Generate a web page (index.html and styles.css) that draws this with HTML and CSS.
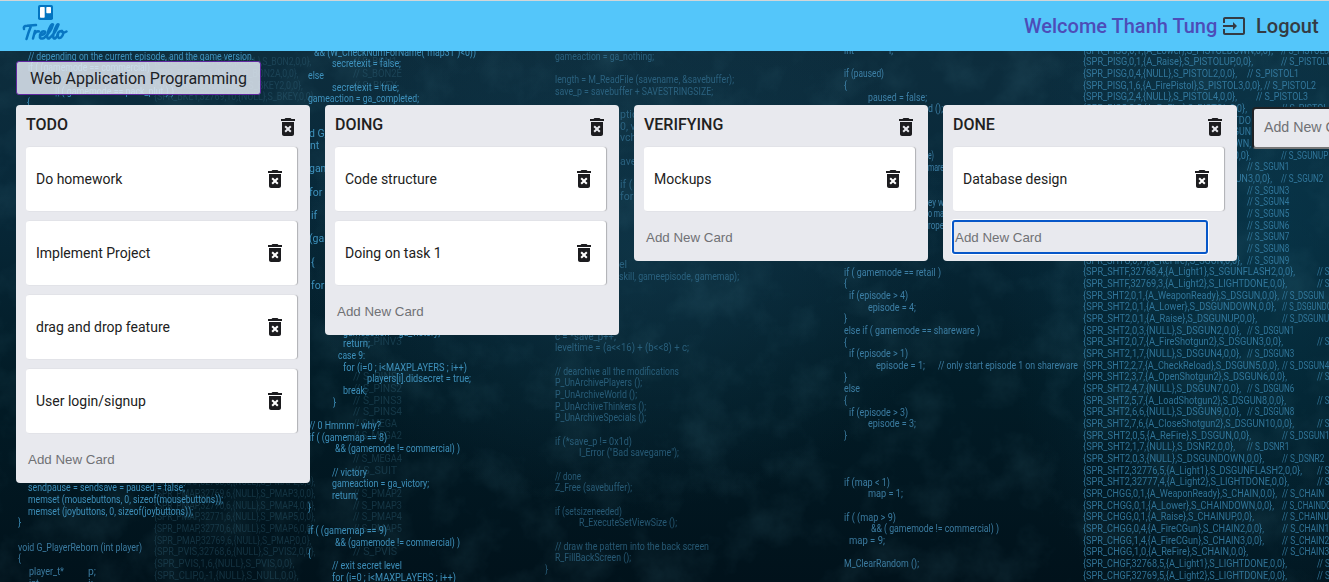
FILE: index.html
```html
<!DOCTYPE html>
<html lang="en">
<head>
<meta charset="utf-8">
<title>Trello</title>
<link rel="stylesheet" href="styles.css">
</head>
<body>
<svg class="wallpaper" viewBox="0 0 1329 582" aria-hidden="true">
  <defs>
    <filter id="clouds" x="0" y="0" width="100%" height="100%">
      <feTurbulence type="fractalNoise" baseFrequency="0.022" numOctaves="5" seed="8"/>
      <feColorMatrix values="0 0 0 0 0.08  0 0 0 0 0.26  0 0 0 0 0.34  2.2 0 0 0 -0.95"/>
    </filter>
  </defs>
  <rect width="1329" height="582" filter="url(#clouds)" opacity="0.13"/>
  <g id="code"></g>
</svg>
<svg class="sprite" aria-hidden="true">
  <symbol id="trash" viewBox="0 0 24 24"><path d="M6 19c0 1.1.9 2 2 2h8c1.1 0 2-.9 2-2V7H6v12zm2.46-7.12 1.41-1.41L12 12.59l2.12-2.12 1.41 1.41L13.41 14l2.12 2.12-1.41 1.41L12 15.41l-2.12 2.12-1.41-1.41L10.59 14l-2.13-2.12zM15.5 4l-1-1h-5l-1 1H5v2h14V4z"/></symbol>
</svg>
<header class="appbar">
  <div class="logo">
    <svg class="logo-mark" viewBox="0 0 15 15"><rect width="15" height="15" rx="1.8" fill="#0274c0"/><rect x="2" y="2" width="4.7" height="10.7" rx=".7" fill="#fff"/><rect x="8.3" y="2" width="4.7" height="6.2" rx=".7" fill="#fff"/></svg>
    <svg class="logo-word" viewBox="0 0 46 20" role="img" aria-label="Trello"><g fill="none" stroke="#0876c2" stroke-width="2.5" stroke-linecap="round" stroke-linejoin="round"><path d="M2 7Q1 3.8 5 3.8L14 3M9 4Q6.500 10 4.500 17"/><path d="M13 9L11 16.500M12 12.500Q14.500 8.500 17 9.500"/><path d="M18.500 13.500Q24 12 23 9.500Q20 8 18 13Q17 18 22 16Q29 10 31 2.500Q29 1 26 10Q24 17 27 16.500Q33 12 36.500 2.500Q35 1 32 10Q30 17 33 16.500Q35 15 36 12.500"/><path d="M40 9Q36 9 35.500 13Q36 17 39 15.500Q43 11 40 9Q40 12 44.500 9.500"/></g></svg>
  </div>
  <div class="account">
    <span class="welcome">Welcome Thanh Tung</span>
    <svg class="exit" viewBox="0 0 24 24"><path d="M21 3.010H3c-1.100 0-2 .9-2 2V9h2V4.990h18v14.030H3V15H1v4.010c0 1.100.9 1.980 2 1.980h18c1.100 0 2-.88 2-1.980v-14c0-1.110-.9-2-2-2zM11 16l4-4-4-4v3H1v2h10v3z"/></svg>
    <span class="logout">Logout</span>
  </div>
</header>
<main>
  <button class="board-name">Web Application Programming</button>
  <div class="lists">
    <section class="list">
      <h2><span>TODO</span><svg><use href="#trash"/></svg></h2>
      <div class="card"><span>Do homework</span><svg><use href="#trash"/></svg></div>
      <div class="card"><span>Implement Project</span><svg><use href="#trash"/></svg></div>
      <div class="card"><span>drag and drop feature</span><svg><use href="#trash"/></svg></div>
      <div class="card"><span>User login/signup</span><svg><use href="#trash"/></svg></div>
      <div class="new-card">Add New Card</div>
    </section>
    <section class="list">
      <h2><span>DOING</span><svg><use href="#trash"/></svg></h2>
      <div class="card"><span>Code structure</span><svg><use href="#trash"/></svg></div>
      <div class="card"><span>Doing on task 1</span><svg><use href="#trash"/></svg></div>
      <div class="new-card">Add New Card</div>
    </section>
    <section class="list">
      <h2><span>VERIFYING</span><svg><use href="#trash"/></svg></h2>
      <div class="card"><span>Mockups</span><svg><use href="#trash"/></svg></div>
      <div class="new-card">Add New Card</div>
    </section>
    <section class="list">
      <h2><span>DONE</span><svg><use href="#trash"/></svg></h2>
      <div class="card"><span>Database design</span><svg><use href="#trash"/></svg></div>
      <div class="new-card focused">Add New Card</div>
    </section>
    <div class="new-list">Add New Column</div>
  </div>
</main>
<script src="wallpaper.js"></script>
</body>
</html>
```
FILE: styles.css
```css
* { box-sizing: border-box; }
body {
  margin: 0;
  height: 582px;
  overflow: hidden;
  font-family: Roboto, "Liberation Sans", sans-serif;
  color: #212121;
  background:
    radial-gradient(ellipse 330px 260px at 630px 250px, rgba(20, 62, 82, .55), transparent),
    radial-gradient(ellipse 260px 420px at 1260px 260px, rgba(8, 62, 84, .55), transparent),
    linear-gradient(#0d2d3d 50px, #08293a 190px, #021c27 380px, #01121b 582px);
}
.wallpaper {
  position: absolute;
  inset: 0;
  z-index: -1;
  width: 1329px;
  height: 582px;
  font: 10.5px Roboto, sans-serif;
}
.sprite { display: none; }
.bright { fill: #459fce; opacity: .88; }
.mid { fill: #4d9bc9; opacity: .75; }
.dim { fill: #3b7ea3; opacity: .62; }
.right { fill: #3c8ab4; opacity: .78; }
.ghost { fill: #397089; opacity: .33; }

.appbar {
  display: flex;
  justify-content: space-between;
  height: 51px;
  padding: 4px 10px 0 22px;
  border-top: 1px solid #d2d6d8;
  background: #54c6fa;
}
.logo { display: flex; flex-direction: column; align-items: center; width: 46px; }
.logo-mark { width: 15px; height: 15px; }
.logo-word { width: 46px; height: 20px; margin-top: 2px; }
.account {
  display: flex;
  align-items: center;
  height: 42px;
  font-size: 20px;
  font-weight: 500;
  line-height: 24px;
}
.welcome { width: 194px; color: #4d4db8; white-space: nowrap; }
.exit { width: 24px; height: 24px; margin: 0 10px 0 4px; fill: #343b43; }
.logout { width: 63px; color: #343b43; }

main { padding: 10px 16px; }
.board-name {
  display: block;
  width: 245px;
  height: 34px;
  padding: 0;
  border: 1px solid #6128a0;
  border-radius: 3px;
  background: rgba(226, 233, 242, .85);
  color: #1c2226;
  font: 16px Roboto, sans-serif;
}
.lists { display: flex; align-items: flex-start; gap: 15px; margin-top: 10px; }
.list {
  flex: 0 0 294px;
  padding: 0 12px 8px 10px;
  border-radius: 4px;
  background: #e8e9ee;
}
.list h2 {
  display: flex;
  justify-content: space-between;
  height: 42px;
  margin: 0;
  padding: 9px 0 0;
  font-size: 16px;
  font-weight: 500;
  line-height: 22px;
}
svg { flex: none; }
.list svg { width: 24px; height: 24px; fill: #1c1c1f; }
.list h2 svg { margin: 1px -2px 0 0; }
.card {
  display: flex;
  align-items: center;
  justify-content: space-between;
  height: 64px;
  width: 271px;
  margin-bottom: 10px;
  padding: 0 10px;
  border-radius: 3px;
  background: #fff;
  box-shadow: 1px 0 1px rgba(0, 0, 0, .25);
  font-size: 14px;
}
.new-card {
  width: 254px;
  height: 32px;
  padding: 1px 0 0 2px;
  color: #707175;
  font: 13.333px/32px "Liberation Sans", sans-serif;
}
.focused {
  border-radius: 2px;
  outline: 2px solid #0757c8;
  outline-offset: -1px;
  box-shadow: 0 0 0 2px #fff;
}
.new-list {
  flex: 0 0 294px;
  height: 42px;
  margin: 2px 0 0 0;
  padding-left: 10px;
  border: 2px solid #202225;
  border-bottom-color: #777;
  border-radius: 4px;
  background: #e8e9ee;
  color: #707175;
  font: 14.2px/37px "Liberation Sans", sans-serif;
}
```
FILE: wallpaper.js
```javascript
// Each block: style, centre of row 0, then [row, x, width, text]; width 0 keeps the natural width.
const ROW = 11.667;
const blocks = [
  ["bright", 56, [
    [0, 28, 226, "// depending on the current episode, and the game version."],
    [1, 28, 122, "if ( (gamemode == commercial)"], [3, 55, 119, "|| ( gamemode == pack_plut ) )"], [4, 27, 3, "{"],
    [37, 28, 157, "sendpause = sendsave = paused = false;"],
    [38, 28, 195, "memset (mousebuttons, 0, sizeof(mousebuttons));"],
    [39, 28, 165, "memset (joybuttons, 0, sizeof(joybuttons));"], [40, 18, 3, "}"]
  ]],
  ["mid", 56, [
    [42.1, 18, 124, "void G_PlayerReborn (int player)"], [43.1, 18, 3, "{"],
    [44.2, 29, 35, "player_t*"], [44.2, 88, 8, "p;"], [45.2, 29, 10, "int"], [45.2, 88, 5, "i;"]
  ]],
  ["bright", 52.3, [
    [0, 314, 162, "&& (W_CheckNumForName(\"map31\")<0))"],
    [1, 332, 69, "secretexit = false;"], [2, 308, 16, "else"],
    [3, 332, 67, "secretexit = true;"], [4, 308, 111, "gameaction = ga_completed;"],
    [7, 309, 0, "d G_"], [8, 310, 0, "nt"], [10, 309, 0, "gam"], [12, 309, 0, "for ("],
    [14, 311, 0, "if"], [16, 309, 0, "(gam"], [18, 311, 0, "{"], [20, 311, 0, "for"],
    [24, 343, 97, "gameaction = ga_victory;"], [25, 343, 27, "return;"], [26, 338, 27, "case 9:"],
    [27, 343, 124, "for (i=0 ; i<MAXPLAYERS ; i++)"], [28, 367, 104, "players[i].didsecret = true;"],
    [29, 343, 24, "break;"], [30, 333, 3, "}"],
    [32, 309, 72, "// 0  Hmmm - why?"], [33, 309, 78, "if ( (gamemap == 8)"],
    [34, 335, 125, "&& (gamemode != commercial) )"], [36, 332, 35, "// victory"],
    [37, 332, 97, "gameaction = ga_victory;"], [38, 332, 26, "return;"], [39, 308, 3, "}"],
    [41, 308, 79, "if ( (gamemap == 9)"], [42, 335, 125, "&& (gamemode != commercial) )"],
    [43, 308, 3, "{"], [44, 332, 70, "// exit secret level"], [45, 332, 124, "for (i=0 ; i<MAXPLAYERS ; i++)"]
  ]],
  ["dim", 56, [
    [0, 555, 99, "gameaction = ga_nothing;"], [2, 555, 179, "length = M_ReadFile (savename, &savebuffer);"],
    [3, 555, 158, "save_p = savebuffer + SAVESTRINGSIZE;"],
    [5, 620, 0, "ption"], [6, 620, 0, "0, v"], [7, 620, 0, "vch"], [9, 620, 0, "ave"], [11, 620, 0, "if ("], [12, 620, 0, "for"],
    [24, 555, 61, "c = *save_p++;"], [25, 555, 134, "leveltime = (a<<16) + (b<<8) + c;"],
    [27, 555, 124, "// dearchive all the modifications"], [28, 555, 87, "P_UnArchivePlayers ();"],
    [29, 555, 82, "P_UnArchiveWorld ();"], [30, 555, 91, "P_UnArchiveThinkers ();"],
    [31, 555, 91, "P_UnArchiveSpecials ();"], [33, 555, 77, "if (*save_p != 0x1d)"],
    [34, 579, 100, "I_Error (\"Bad savegame\");"], [36, 555, 26, "// done"],
    [37, 555, 77, "Z_Free (savebuffer);"], [39, 555, 67, "if (setsizeneeded)"],
    [40, 579, 98, "R_ExecuteSetViewSize ();"], [42, 555, 154, "// draw the pattern into the back screen"],
    [43, 555, 76, "R_FillBackScreen ();"], [44, 545, 3, "}"]
  ]],
  ["dim", 54.7, [
    [18, 619, 0, "el"], [19, 619, 120, "skill, gameepisode, gamemap);"]
  ]],
  ["mid", 50.6, [
    [0, 844, 10, "int"], [0, 889, 4, "i;"], [2, 844, 40, "if (paused)"], [3, 844, 3, "{"],
    [4, 868, 59, "paused = false;"], [5, 928, 15, "d ();"], [9, 928, 6, "e)"], [10, 928, 16, "mare"],
    [13, 928, 16, "ey w"], [14, 928, 16, "o ma"], [15, 928, 16, "rope"],
    [19, 844, 97, "if ( gamemode == retail )"], [20, 844, 3, "{"], [21, 849, 59, "if (episode > 4)"],
    [22, 868, 48, "episode = 4;"], [23, 844, 3, "}"], [24, 844, 136, "else if ( gamemode == shareware )"],
    [25, 844, 3, "{"], [26, 849, 59, "if (episode > 1)"], [27, 876, 49, "episode = 1;"],
    [27, 938, 140, "// only start episode 1 on shareware"], [28, 844, 3, "}"], [29, 844, 16, "else"],
    [30, 844, 3, "{"], [31, 849, 59, "if (episode > 3)"], [32, 868, 48, "episode = 3;"], [33, 844, 3, "}"],
    [37, 844, 46, "if (map < 1)"], [38, 868, 35, "map = 1;"], [40, 844, 52, "if ( (map > 9)"],
    [41, 871, 128, "&& ( gamemode != commercial) )"], [42, 849, 36, "map = 9;"], [44, 844, 75, "M_ClearRandom ();"]
  ]]
];

// Sprite table: [row, statement, statement width, comment x, comment].
const sprites = [
  [0, "PISG,0,1,{A_Lower},S_PISTOLDOWN,0,0},", 190, 1281, "S_PISTOLDOWN"],
  [1, "PISG,0,1,{A_Raise},S_PISTOLUP,0,0},", 170, 1281, "S_PISTOLUP"],
  [2, "PISG,0,4,{NULL},S_PISTOL2,0,0},", 154, 1247, "S_PISTOL1"],
  [3, "PISG,1,6,{A_FirePistol},S_PISTOL3,0,0},", 179, 1264, "S_PISTOL2"],
  [4, "PISG,2,4,{NULL},S_PISTOL4,0,0},", 154, 1256, "S_PISTOL3"],
  [5, "PISG,3,5,{A_ReFire},S_PISTOL,0,0},", 164, 1281, "S_PISTOL4"],
  [6, "PISF,32768,7,{A_Light1},S_LIGHTDO", 168, 0, ""],
  [7, "SGUN,0,1,{A_WeaponReady},S_SGUN", 168, 0, ""],
  [8, "SHTG,0,1,{A_Lower},S_SGUNDOWN,", 168, 0, ""],
  [9, "SHTG,0,1,{A_Raise},S_SGUNUP,0,0},", 168, 1281, "S_SGUNUP"],
  [10, "SHTG,0,3,{NULL},S_SGUN2,0,0},", 150, 1247, "S_SGUN1"],
  [11, "SHTG,0,7,{A_FireShotgun},S_SGUN3,0,0},", 189, 1281, "S_SGUN2"],
  [12, "SHTG,0,5,{NULL},S_SGUN4,0,0},", 150, 1247, "S_SGUN3"],
  [13, "SHTG,1,5,{NULL},S_SGUN5,0,0},", 150, 1247, "S_SGUN4"],
  [14, "SHTG,2,4,{NULL},S_SGUN6,0,0},", 150, 1247, "S_SGUN5"],
  [15, "SHTG,3,5,{NULL},S_SGUN7,0,0},", 150, 1247, "S_SGUN6"],
  [16, "SHTG,2,5,{NULL},S_SGUN8,0,0},", 150, 1247, "S_SGUN7"],
  [17, "SHTG,1,3,{NULL},S_SGUN9,0,0},", 150, 1247, "S_SGUN8"],
  [18, "SHTG,0,7,{A_ReFire},S_SGUN,0,0},", 159, 1247, "S_SGUN9"],
  [19, "SHTF,32768,4,{A_Light1},S_SGUNFLASH2,0,0},", 212, 1317, "S_SGUNFLASH1"],
  [20, "SHTF,32769,3,{A_Light2},S_LIGHTDONE,0,0},", 204, 1317, "S_SGUNFLASH2"],
  [21, "SHT2,0,1,{A_WeaponReady},S_DSGUN,0,0},", 196, 1282, "S_DSGUN"],
  [22, "SHT2,0,1,{A_Lower},S_DSGUNDOWN,0,0},", 193, 1282, "S_DSGUNDOWN"],
  [23, "SHT2,0,1,{A_Raise},S_DSGUNUP,0,0},", 174, 1282, "S_DSGUNUP"],
  [24, "SHT2,0,3,{NULL},S_DSGUN2,0,0},", 158, 1247, "S_DSGUN1"],
  [25, "SHT2,0,7,{A_FireShotgun2},S_DSGUN3,0,0},", 200, 1317, "S_DSGUN2"],
  [26, "SHT2,1,7,{NULL},S_DSGUN4,0,0},", 158, 1247, "S_DSGUN3"],
  [27, "SHT2,2,7,{A_CheckReload},S_DSGUN5,0,0},", 196, 1282, "S_DSGUN4"],
  [28, "SHT2,3,7,{A_OpenShotgun2},S_DSGUN6,0,0},", 204, 1317, "S_DSGUN5"],
  [29, "SHT2,4,7,{NULL},S_DSGUN7,0,0},", 158, 1247, "S_DSGUN6"],
  [30, "SHT2,5,7,{A_LoadShotgun2},S_DSGUN8,0,0},", 203, 1317, "S_DSGUN7"],
  [31, "SHT2,6,6,{NULL},S_DSGUN9,0,0},", 158, 1247, "S_DSGUN8"],
  [32, "SHT2,7,6,{A_CloseShotgun2},S_DSGUN10,0,0},", 211, 1317, "S_DSGUN9"],
  [33, "SHT2,0,5,{A_ReFire},S_DSGUN,0,0},", 168, 1282, "S_DSGUN10"],
  [34, "SHT2,1,7,{NULL},S_DSNR2,0,0},", 152, 1247, "S_DSNR1"],
  [35, "SHT2,0,3,{NULL},S_DSGUNDOWN,0,0},", 181, 1282, "S_DSNR2"],
  [36, "SHT2,32776,5,{A_Light1},S_DSGUNFLASH2,0,0},", 219, 1317, "S_DSGUNFLASH1"],
  [37, "SHT2,32777,4,{A_Light2},S_LIGHTDONE,0,0},", 206, 1317, "S_DSGUNFLASH2"],
  [38, "CHGG,0,1,{A_WeaponReady},S_CHAIN,0,0},", 194, 1282, "S_CHAIN"],
  [39, "CHGG,0,1,{A_Lower},S_CHAINDOWN,0,0},", 191, 1282, "S_CHAINDOWN"],
  [40, "CHGG,0,1,{A_Raise},S_CHAINUP,0,0},", 171, 1282, "S_CHAINUP"],
  [41, "CHGG,0,4,{A_FireCGun},S_CHAIN2,0,0},", 181, 1282, "S_CHAIN1"],
  [42, "CHGG,1,4,{A_FireCGun},S_CHAIN3,0,0},", 181, 1282, "S_CHAIN2"],
  [43, "CHGG,1,0,{A_ReFire},S_CHAIN,0,0},", 165, 1282, "S_CHAIN3"],
  [44, "CHGF,32768,5,{A_Light1},S_LIGHTDONE,0,0},", 204, 1317, "S_CHAINFLASH1"],
  [45, "CHGF,32769,5,{A_Light2},S_LIGHTDONE,0,0},", 204, 1317, "S_CHAINFLASH2"]
];

const layer = document.getElementById("code");
function draw(style, x, centre, width, text) {
  const el = document.createElementNS("http://www.w3.org/2000/svg", "text");
  el.setAttribute("class", style);
  el.setAttribute("x", x);
  el.setAttribute("y", centre + 3.5);
  if (width) {
    el.setAttribute("textLength", width);
    el.setAttribute("lengthAdjust", "spacingAndGlyphs");
  }
  el.textContent = text;
  layer.append(el);
}

// Faint second table behind the left half, in the rows the lists leave open.
const faint = [
  [1, "{SPR_PUNG,32769,6,{NULL},S_BON2,0,0},", "// S_BON1"],
  [2, "{SPR_BON2,1,6,{NULL},S_BON2A,0,0},", "// S_BON2E"],
  [3, "{SPR_BKEY,0,10,{NULL},S_BKEY2,0,0},", "// S_BKEY"],
  [4, "{SPR_BKEY,32769,10,{NULL},S_BKEY,0,0},", ""],
  [25, "", "// S_PINV3"], [28, "", "// S_PINS"], [29, "", "// S_PINS2"], [30, "", "// S_PINS3"],
  [31, "", "// S_PINS4"], [32, "", "// S_MEGA"], [33, "", "// S_MEGA2"], [35, "", "// S_MEGA4"], [36, "", "// S_SUIT"],
  [37, "{SPR_PMAP,32768,6,{NULL},S_PMAP2,0,0},", ""],
  [38, "{SPR_PMAP,32769,6,{NULL},S_PMAP3,0,0},", "// S_PMAP2"],
  [39, "{SPR_PMAP,32770,6,{NULL},S_PMAP4,0,0},", "// S_PMAP3"],
  [40, "{SPR_PMAP,32771,6,{NULL},S_PMAP5,0,0},", "// S_PMAP4"],
  [41, "{SPR_PMAP,32770,6,{NULL},S_PMAP6,0,0},", "// S_PMAP5"],
  [42, "{SPR_PMAP,32769,6,{NULL},S_PMAP,0,0},", ""],
  [43, "{SPR_PVIS,32768,6,{NULL},S_PVIS2,0,0},", "// S_PVIS"],
  [44, "{SPR_PVIS,1,6,{NULL},S_PVIS,0,0},", ""],
  [45, "{SPR_CLIP,0,-1,{NULL},S_NULL,0,0},", ""]
];
for (const [row, text, comment] of faint) {
  if (text) draw("ghost", 154, 50 + row * ROW, text.length * 4.25, text);
  if (comment) draw("ghost", 353, 50 + row * ROW, comment.length * 4.9, comment);
}
for (const [style, start, lines] of blocks)
  for (const [row, x, width, text] of lines) draw(style, x, start + row * ROW, width, text);
for (const [row, text, width, x, comment] of sprites) {
  draw("right", 1083, 50 + row * ROW, width, "{SPR_" + text);
  if (comment) draw("right", x, 50 + row * ROW, 8 + comment.length * 4.9, "// " + comment);
}
```
